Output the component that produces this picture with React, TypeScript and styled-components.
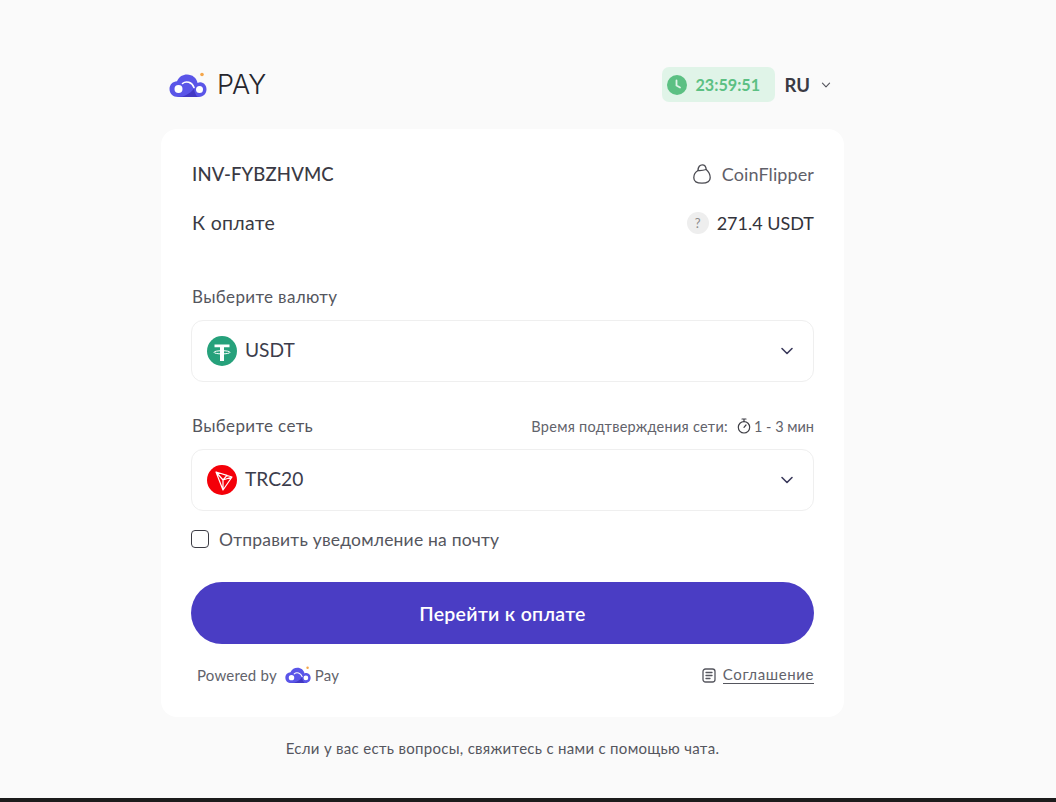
import React from "react";
import styled, { createGlobalStyle } from "styled-components";

const Global = createGlobalStyle`
  html, body { margin: 0; padding: 0; background: #fafafa; }
  body { font-family: "Lato", "Liberation Sans", sans-serif; color: #3a3a44; }
  * { box-sizing: border-box; }
`;

const Page = styled.div`
  width: 1056px;
  height: 798px;
  padding-right: 51px;
  display: flex;
  flex-direction: column;
  align-items: center;
  overflow: hidden;
`;
const BottomBar = styled.div`
  height: 4px;
  background: #1c1c1c;
`;
const Column = styled.div`
  width: 683px;
  padding-top: 67px;
`;
const Header = styled.header`
  height: 62px;
  padding: 0 13px 27px 8px;
  display: flex;
  align-items: center;
  justify-content: space-between;
`;
const Brand = styled.div`
  display: flex;
  align-items: center;
  gap: 10px;
  font-family: "Inter", sans-serif;
  font-size: 27px;
  font-weight: 300;
  color: #26262c;
`;
const HeaderRight = styled.div`
  display: flex;
  align-items: center;
`;
const Timer = styled.div`
  width: 113px;
  height: 35px;
  border-radius: 7px;
  background: #e0f4e8;
  display: flex;
  align-items: center;
  gap: 8px;
  padding-left: 5px;
  font-size: 16.2px;
  font-weight: 700;
  color: #5cc083;
`;
const Lang = styled.div`
  margin-left: 9px;
  display: flex;
  align-items: center;
  gap: 11px;
  font-size: 18.5px;
  font-weight: 700;
  color: #3a3a44;
`;
const Card = styled.main`
  height: 588px;
  background: #fff;
  border-radius: 16px;
  padding: 31px 30px 0;
`;
const Row = styled.div<{ $mt?: number }>`
  display: flex;
  align-items: center;
  justify-content: space-between;
  margin-top: ${(p) => p.$mt ?? 0}px;
`;
const Invoice = styled.div`
  margin-left: 1px;
  font-size: 18.5px;
  font-weight: 500;
  height: 28px;
  line-height: 28px;
  letter-spacing: 0.15px;
  color: #3a3a44;
`;
const Merchant = styled.div`
  display: flex;
  align-items: center;
  gap: 11px;
  font-size: 18px;
  color: #5f6069;
  letter-spacing: 0.1px;
`;
const Label = styled.div`
  margin-left: 1px;
  font-size: 19.5px;
  color: #3a3a44;
  letter-spacing: 0.3px;
`;
const Amount = styled.div`
  display: flex;
  align-items: center;
  gap: 8px;
  font-size: 18px;
  color: #33333b;
`;
const Help = styled.span`
  width: 22px;
  height: 22px;
  border-radius: 50%;
  background: #eeeeee;
  color: #8a8a8a;
  font-size: 13px;
  display: flex;
  align-items: center;
  justify-content: center;
`;
const FieldLabel = styled.div`
  margin-left: 1px;
  font-size: 17px;
  letter-spacing: 0.36px;
  color: #55565e;
  height: 24px;
  line-height: 24px;
`;
const Select = styled.div`
  height: 62px;
  margin-top: 11px;
  border: 1px solid #efefef;
  border-radius: 12px;
  padding: 0 19px 0 15px;
  display: flex;
  align-items: center;
  gap: 8px;
`;
const SelectText = styled.span`
  flex: 1;
  padding-bottom: 3px;
  font-size: 19.2px;
  color: #3c3d4c;
`;
const NetworkInfo = styled.div`
  display: flex;
  align-items: center;
  font-size: 14.5px;
  letter-spacing: 0.27px;
  color: #62636b;
`;
const InfoIcon = styled.span`
  display: flex;
  margin: 0 3px 0 9px;
`;
const Duration = styled.span`
  letter-spacing: 0;
`;
const CheckRow = styled.label`
  display: flex;
  align-items: center;
  gap: 10px;
  margin-top: 16px;
  height: 24px;
  font-size: 17.5px;
  letter-spacing: 0.2px;
  color: #55565e;
`;
const Box = styled.span`
  width: 18px;
  height: 18px;
  border: 1.5px solid #3c3c44;
  border-radius: 4px;
`;
const Pay = styled.button`
  display: block;
  width: 100%;
  height: 62px;
  margin-top: 31px;
  border: 0;
  border-radius: 31px;
  background: #4a3dc4;
  color: #fff;
  font-family: inherit;
  font-size: 19.5px;
  font-weight: 600;
  letter-spacing: 0.3px;
`;
const CardFooter = styled.div`
  margin-top: 20px;
  padding-left: 6px;
  display: flex;
  align-items: center;
  justify-content: space-between;
  font-size: 15px;
  letter-spacing: 0.2px;
  color: #62636b;
  height: 22px;
`;
const Powered = styled.div`
  display: flex;
  align-items: center;
  gap: 7px;
`;
const PoweredLogo = styled.span`
  display: flex;
  margin: 0 -3px 0 1px;
`;
const Agreement = styled.div`
  display: flex;
  align-items: center;
  gap: 7px;
`;
const AgreementLink = styled.span`
  border-bottom: 1px solid #55565e;
  line-height: 17px;
  letter-spacing: 0.6px;
`;
const Note = styled.p`
  margin: 22px 0 0;
  text-align: center;
  font-size: 15px;
  letter-spacing: 0.3px;
  color: #55565e;
`;

const Logo = ({ w }: { w: number }) => (
  <svg width={w} height={(w * 26) / 38} viewBox="0 0 38 26">
    <circle cx="33" cy="2.5" r="1.8" fill="#f5a64a" />
    <path
      d="M9 25C4 25 0.5 21.5 0.5 17C.5 12.5 4 9.5 8 9.3C10 4.5 14 2.5 18 2.5C23.5 2.5 27.5 6 28.6 11C29.6 10.4 30.5 10.2 31.5 10.3C35 10.6 37.5 13.5 37.5 17.3C37.5 21.5 34.5 25 30 25Z"
      fill="#5a55e8"
    />
    <path d="M9 25C15 25 21 22 25 16.5C25.5 20 27 25 30 25Z" fill="#4238c4" />
    <circle cx="9.5" cy="17" r="4" fill="#fff" />
    <path d="M13.5 11.5C17 8.5 23 10 25 15.5" fill="none" stroke="#fff" strokeWidth="1.6" strokeLinecap="round" />
    <circle cx="30.5" cy="17.5" r="3.5" fill="#fff" />
  </svg>
);

const Chevron = ({ size = 14, color = "#3b3a5c" }: { size?: number; color?: string }) => (
  <svg width={size} height={size} viewBox="0 0 14 14" fill="none">
    <path d="M2 4.5L7 9.5L12 4.5" stroke={color} strokeWidth="1.6" strokeLinecap="round" strokeLinejoin="round" />
  </svg>
);

const ClockIcon = () => (
  <svg width="20" height="20" viewBox="0 0 20 20">
    <circle cx="10" cy="10" r="10" fill="#5cc083" />
    <path d="M9.5 5.5V10.5L13 12.5" fill="none" stroke="#e0f4e8" strokeWidth="1.8" strokeLinecap="round" />
  </svg>
);

const BagIcon = () => (
  <svg width="18" height="20" viewBox="0 0 18 20" fill="none" stroke="#4b4b52" strokeWidth="1.3" strokeLinejoin="round" strokeLinecap="round">
    <path d="M5 6.5C5 2.8 7 .8 9.3 .8C11.5 .8 13 2.8 13.2 5.5C15.5 7.5 17.2 10.5 17.2 13.8C17.2 17.5 14.5 19.2 9 19.2C3.5 19.2 .8 17.5 .8 13.8C.8 10.5 2.2 8 5 6.5Z" />
    <path d="M5 6.5C8 6.8 10.8 6.3 13.2 5.5" />
  </svg>
);

const TetherIcon = () => (
  <svg width="30" height="30" viewBox="0 0 30 30">
    <circle cx="15" cy="15" r="15" fill="#26a17b" />
    <path fill="#fff" d="M7.5 8.5H22.5V11.3H17V15H13V11.3H7.5ZM13 18H17V25H13Z" />
    <path fill="#fff" d="M13 15V18H17V15Z" />
    <ellipse cx="15" cy="16.3" rx="8" ry="1.6" fill="none" stroke="#fff" strokeWidth="1" />
  </svg>
);

const TronIcon = () => (
  <svg width="30" height="30" viewBox="0 0 30 30">
    <circle cx="15" cy="15" r="15" fill="#f40009" />
    <path d="M9 7L25 12L16 25ZM9 7L16 15L16 25M16 15L25 12M9 7L20 10.4L16 15" fill="none" stroke="#fff" strokeWidth="1.2" strokeLinejoin="round" />
  </svg>
);

const StopwatchIcon = () => (
  <svg width="14" height="16" viewBox="0 0 14 16" fill="none" stroke="#3f3f46" strokeWidth="1.2" strokeLinecap="round">
    <circle cx="7" cy="9.3" r="5.7" />
    <path d="M5 1H9M7 1V3.5M7 9.3L9 7" />
  </svg>
);

const DocIcon = () => (
  <svg width="14" height="15" viewBox="0 0 14 15" fill="none" stroke="#55565e" strokeWidth="1.3" strokeLinecap="round">
    <rect x="1" y="1" width="12" height="13" rx="2.5" />
    <path d="M4 4.5H10M4 7.5H10M4 10.5H8" />
  </svg>
);

export default function App() {
  return (
    <>
      <Global />
      <Page>
        <Column>
          <Header>
            <Brand>
              <Logo w={38} />
              PAY
            </Brand>
            <HeaderRight>
              <Timer>
                <ClockIcon />
                23:59:51
              </Timer>
              <Lang>
                RU
                <Chevron size={10} color="#55565e" />
              </Lang>
            </HeaderRight>
          </Header>
          <Card>
            <Row>
              <Invoice>INV-FYBZHVMC</Invoice>
              <Merchant>
                <BagIcon />
                CoinFlipper
              </Merchant>
            </Row>
            <Row $mt={23}>
              <Label>К оплате</Label>
              <Amount>
                <Help>?</Help>
                271.4 USDT
              </Amount>
            </Row>
            <Row $mt={51}>
              <FieldLabel>Выберите валюту</FieldLabel>
            </Row>
            <Select>
              <TetherIcon />
              <SelectText>USDT</SelectText>
              <Chevron />
            </Select>
            <Row $mt={32}>
              <FieldLabel>Выберите сеть</FieldLabel>
              <NetworkInfo>
                Время подтверждения сети:
                <InfoIcon>
                  <StopwatchIcon />
                </InfoIcon>
                <Duration>1 - 3 мин</Duration>
              </NetworkInfo>
            </Row>
            <Select>
              <TronIcon />
              <SelectText>TRC20</SelectText>
              <Chevron />
            </Select>
            <CheckRow>
              <Box />
              Отправить уведомление на почту
            </CheckRow>
            <Pay>Перейти к оплате</Pay>
            <CardFooter>
              <Powered>
                Powered by
                <PoweredLogo>
                  <Logo w={26} />
                </PoweredLogo>
                Pay
              </Powered>
              <Agreement>
                <DocIcon />
                <AgreementLink>Соглашение</AgreementLink>
              </Agreement>
            </CardFooter>
          </Card>
          <Note>Если у вас есть вопросы, свяжитесь с нами с помощью чата.</Note>
        </Column>
      </Page>
      <BottomBar />
    </>
  );
}
